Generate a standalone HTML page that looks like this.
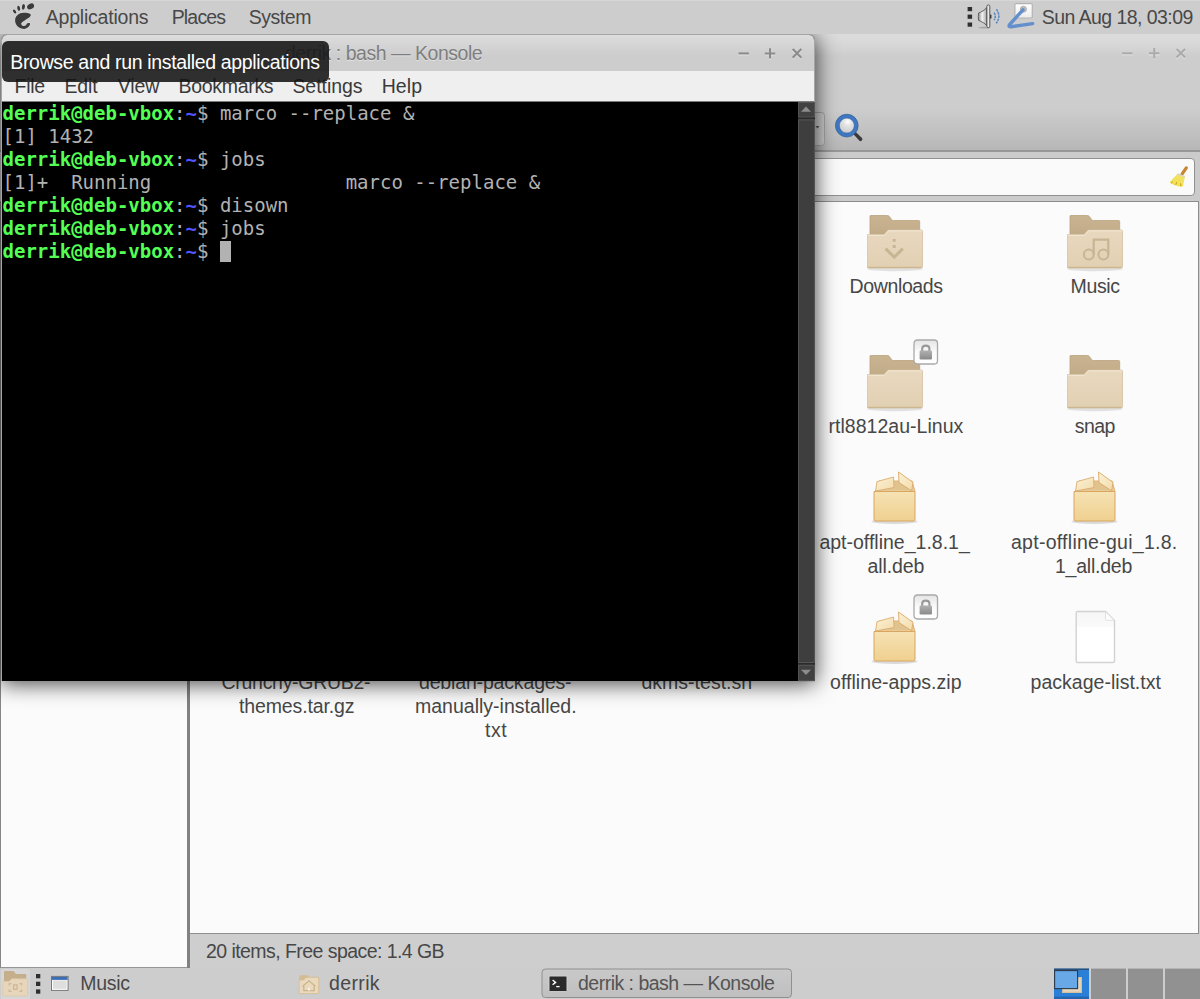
<!DOCTYPE html>
<html lang="en"><head><meta charset="utf-8"><title>derrik : bash — Konsole</title>
<style>
html,body{margin:0;padding:0}
body{width:1200px;height:999px;position:relative;overflow:hidden;background:#cdcdcd;font-family:"Liberation Sans","DejaVu Sans",sans-serif;font-size:19.5px;color:#484848}
.abs{position:absolute}
.t{position:absolute;white-space:nowrap;line-height:24px;display:block}
#toppanel{left:0;top:0;width:1200px;height:34px;background:#cdcdcd;border-top:1px solid #d7d7d7;box-sizing:border-box}
#caja{left:0;top:34px;width:1200px;height:934px;background:#cecece}
#cajahead{left:0;top:0;width:1200px;height:117px;background:linear-gradient(#dcdcdc 0,#d9d9d9 8px,#d3d3d3 16px,#cdcdcd 22px,#cdcdcd 75px,#b7b7b7 116px)}
#cajaline{left:0;top:116.3px;width:1200px;height:1.4px;background:#979797}
#locarea{left:0;top:117.7px;width:1200px;height:50px;background:#cbcbcb}
#entry{left:200px;top:123.5px;width:994.5px;height:38px;box-sizing:border-box;border:1.2px solid #909090;border-radius:4px;background:#fafafa}
#sidebar{left:0;top:167px;width:187px;height:767px;background:#fbfbfb;border-left:1px solid #868686;border-bottom:1.2px solid #959595;box-sizing:border-box}
#sep{left:187px;top:167px;width:3px;height:767px;background:#818181}
#iconview{left:190px;top:167px;width:1009px;height:733px;background:#fbfbfb;border-top:1.4px solid #8c8c8c;border-bottom:1px solid #8f8f8f;border-right:1px solid #8c8c8c;box-sizing:border-box}
#botpanel{left:0;top:968px;width:1200px;height:31px;background:#cdcdcd}
#konsole{left:1px;top:34px;width:814px;height:647px;box-sizing:border-box;background:#000;border:1px solid #a6a6a6;border-bottom:none;border-radius:6px 6px 0 0;box-shadow:0 2px 22px rgba(0,0,0,.77)}
#ktitle{left:0;top:0;width:812px;height:36px;border-radius:5px 5px 0 0;background:linear-gradient(#dddddd 0,#d6d6d6 8px,#d1d1d1 15px,#cdcdcd 21px)}
#kmenu{left:0;top:36px;width:812px;height:30px;background:#efefef;border-bottom:1px solid #7c7c7c}
#kterm{left:0;top:67px;width:795.5px;padding-left:.5px;height:579px;background:#000;color:#b2b2b2;font-family:"DejaVu Sans Mono","Liberation Mono",monospace;font-size:19px;line-height:23px;white-space:pre;overflow:hidden}
#kterm .ln{height:23px}
#kterm b.g{color:#54ff54}
#kterm b.b{color:#5454ff}
#kterm .cur{background:#b2b2b2;display:inline-block;height:21px;vertical-align:top;margin-top:1px}
#kscroll{left:796px;top:67px;width:17px;height:579px;background:#3d3d3d}
#tooltip{left:2px;top:41px;width:327px;height:40.5px;border-radius:6px;background:rgba(20,20,20,.875)}
</style></head><body>

<div class="abs" id="caja">
 <div class="abs" id="cajahead"></div>
 <div class="abs" id="cajaline"></div>
 <div class="abs" id="locarea"></div>
 <div class="abs" id="entry"></div>
 <div class="abs" id="sidebar"></div>
 <div class="abs" id="sep"></div>
 <div class="abs" id="iconview"></div>
</div>
<!-- caja window buttons + toolbar icons -->
<svg class="abs" style="left:800px;top:34px" width="400" height="170" viewBox="800 34 400 170" fill="none">
<path d="M1122.1 54.4 H1132.5" stroke="rgba(255,255,255,.38)" stroke-width="2"/><path d="M1149.0 54.4 H1159.4 M1154.2 49.199999999999996 V59.6" stroke="rgba(255,255,255,.38)" stroke-width="2"/><path d="M1176.5 50.1 L1185.1 58.699999999999996 M1185.1 50.1 L1176.5 58.699999999999996" stroke="rgba(255,255,255,.38)" stroke-width="2.1"/><path d="M1122.1 53.3 H1132.5" stroke="#ababab" stroke-width="2"/><path d="M1149.0 53.3 H1159.4 M1154.2 48.099999999999994 V58.5" stroke="#ababab" stroke-width="2"/><path d="M1176.5 49.0 L1185.1 57.599999999999994 M1185.1 49.0 L1176.5 57.599999999999994" stroke="#ababab" stroke-width="2.1"/>
<rect x="790.5" y="112.5" width="34" height="33" rx="3" fill="#cfcfcf" stroke="#a6a6a6"/>
<path d="M815.5 126 h4 l-2 2.6z" fill="#555"/>
<!-- search -->
<defs><radialGradient id="lens" cx=".55" cy=".3" r=".7"><stop offset="0" stop-color="#ffffff"/><stop offset=".3" stop-color="#e4e4e4"/><stop offset="1" stop-color="#c4c4c4"/></radialGradient></defs>
<path d="M853 133.8 L855.2 131.6 L862 137.9 Q863 139.2 861.8 140.5 Q860.5 141.7 859.2 140.6Z" fill="#3a3a3a"/>
<circle cx="846.8" cy="125.6" r="9.4" fill="url(#lens)" stroke="#3f78c0" stroke-width="3.8"/>
<circle cx="846.8" cy="125.6" r="11.4" stroke="#2b5a9c" stroke-width=".8" opacity=".85"/>
<circle cx="846.8" cy="125.6" r="7.5" stroke="#2b5a9c" stroke-width=".8" opacity=".7"/>
<!-- broom -->
<path d="M1186.3 167.9 L1182 174.2" stroke="#c78632" stroke-width="3.2" stroke-linecap="round"/>
<path d="M1177.6 173.2 L1185.3 176 L1184.6 177.8 L1176.8 175Z" fill="#d9d3c0"/>
<path d="M1176.6 174.8 L1184.8 177.6 L1182.8 186.6 Q1176 187 1169.6 182.2Z" fill="#f2e15c"/>
<path d="M1172.3 181.5 l-.9 2 M1176.6 182.2 l-.8 2.6 M1180.6 183.4 l.3 2.6" stroke="#c99a16" stroke-width="1"/>
</svg>
<!-- file icons -->
<svg class="abs" style="left:867px;top:214.5px" width="60" height="60" viewBox="0 0 60 60">
<defs><linearGradient id="fb" x1="0" y1="0" x2="0" y2="1"><stop offset="0" stop-color="#c9b491"/><stop offset="1" stop-color="#bda682"/></linearGradient>
<linearGradient id="ff" x1="0" y1="0" x2="0" y2="1"><stop offset="0" stop-color="#e8d8be"/><stop offset="1" stop-color="#e2d0b3"/></linearGradient></defs>
<ellipse cx="28" cy="54" rx="28" ry="2.2" fill="#000" opacity=".10"/>
<path d="M3.6 0.5 H20.5 Q21.6 0.5 22.3 1.4 L24.6 4.6 Q25.3 5.5 26.4 5.5 H51.7 Q52.7 5.5 52.7 6.5 V30 H3 V1.1 Q3 0.5 3.6 0.5Z" fill="url(#fb)" stroke="#b9a27d" stroke-width=".8"/>
<path d="M1.2 19.5 H16.2 Q17.3 19.5 18 18.7 L20.2 15.9 Q20.9 15 22 15 H54.3 Q55.5 15 55.5 16.2 V51.6 Q55.5 53 54.1 53 H1.4 Q0 53 0 51.6 V20.7 Q0 19.5 1.2 19.5Z" fill="url(#ff)" stroke="#d3bf9e" stroke-width=".8"/>
<path d="M1 20.3 H16.4 Q17.5 20.3 18.3 19.4 L20.5 16.6 Q21 15.9 22 15.9 H54.6" fill="none" stroke="#f3e9d6" stroke-width="1"/>
<path d="M0.8 52.3 H54.7" stroke="#cbb690" stroke-width="1.2" fill="none"/>
<g fill="none" stroke="#c8b593" stroke-width="3"><path d="M18.6 33.6 L27.2 42.2 L35.8 33.6"/></g><rect x="25.7" y="24" width="3" height="2.8" fill="#c8b593"/><rect x="25.7" y="30" width="3" height="3" fill="#c8b593"/></svg>
<svg class="abs" style="left:1066.5px;top:214.5px" width="60" height="60" viewBox="0 0 60 60">
<defs><linearGradient id="fb" x1="0" y1="0" x2="0" y2="1"><stop offset="0" stop-color="#c9b491"/><stop offset="1" stop-color="#bda682"/></linearGradient>
<linearGradient id="ff" x1="0" y1="0" x2="0" y2="1"><stop offset="0" stop-color="#e8d8be"/><stop offset="1" stop-color="#e2d0b3"/></linearGradient></defs>
<ellipse cx="28" cy="54" rx="28" ry="2.2" fill="#000" opacity=".10"/>
<path d="M3.6 0.5 H20.5 Q21.6 0.5 22.3 1.4 L24.6 4.6 Q25.3 5.5 26.4 5.5 H51.7 Q52.7 5.5 52.7 6.5 V30 H3 V1.1 Q3 0.5 3.6 0.5Z" fill="url(#fb)" stroke="#b9a27d" stroke-width=".8"/>
<path d="M1.2 19.5 H16.2 Q17.3 19.5 18 18.7 L20.2 15.9 Q20.9 15 22 15 H54.3 Q55.5 15 55.5 16.2 V51.6 Q55.5 53 54.1 53 H1.4 Q0 53 0 51.6 V20.7 Q0 19.5 1.2 19.5Z" fill="url(#ff)" stroke="#d3bf9e" stroke-width=".8"/>
<path d="M1 20.3 H16.4 Q17.5 20.3 18.3 19.4 L20.5 16.6 Q21 15.9 22 15.9 H54.6" fill="none" stroke="#f3e9d6" stroke-width="1"/>
<path d="M0.8 52.3 H54.7" stroke="#cbb690" stroke-width="1.2" fill="none"/>
<g fill="none" stroke="#c8b593" stroke-width="2"><circle cx="21.8" cy="39.5" r="4.9"/><circle cx="36.4" cy="39.5" r="4.9"/><path d="M26.7 39.5 V24.6 H41.3 V39.5" stroke-width="2.2"/></g></svg>
<svg class="abs" style="left:867px;top:354.5px" width="60" height="60" viewBox="0 0 60 60">
<defs><linearGradient id="fb" x1="0" y1="0" x2="0" y2="1"><stop offset="0" stop-color="#c9b491"/><stop offset="1" stop-color="#bda682"/></linearGradient>
<linearGradient id="ff" x1="0" y1="0" x2="0" y2="1"><stop offset="0" stop-color="#e8d8be"/><stop offset="1" stop-color="#e2d0b3"/></linearGradient></defs>
<ellipse cx="28" cy="54" rx="28" ry="2.2" fill="#000" opacity=".10"/>
<path d="M3.6 0.5 H20.5 Q21.6 0.5 22.3 1.4 L24.6 4.6 Q25.3 5.5 26.4 5.5 H51.7 Q52.7 5.5 52.7 6.5 V30 H3 V1.1 Q3 0.5 3.6 0.5Z" fill="url(#fb)" stroke="#b9a27d" stroke-width=".8"/>
<path d="M1.2 19.5 H16.2 Q17.3 19.5 18 18.7 L20.2 15.9 Q20.9 15 22 15 H54.3 Q55.5 15 55.5 16.2 V51.6 Q55.5 53 54.1 53 H1.4 Q0 53 0 51.6 V20.7 Q0 19.5 1.2 19.5Z" fill="url(#ff)" stroke="#d3bf9e" stroke-width=".8"/>
<path d="M1 20.3 H16.4 Q17.5 20.3 18.3 19.4 L20.5 16.6 Q21 15.9 22 15.9 H54.6" fill="none" stroke="#f3e9d6" stroke-width="1"/>
<path d="M0.8 52.3 H54.7" stroke="#cbb690" stroke-width="1.2" fill="none"/>
</svg>
<svg class="abs" style="left:1066.5px;top:354.5px" width="60" height="60" viewBox="0 0 60 60">
<defs><linearGradient id="fb" x1="0" y1="0" x2="0" y2="1"><stop offset="0" stop-color="#c9b491"/><stop offset="1" stop-color="#bda682"/></linearGradient>
<linearGradient id="ff" x1="0" y1="0" x2="0" y2="1"><stop offset="0" stop-color="#e8d8be"/><stop offset="1" stop-color="#e2d0b3"/></linearGradient></defs>
<ellipse cx="28" cy="54" rx="28" ry="2.2" fill="#000" opacity=".10"/>
<path d="M3.6 0.5 H20.5 Q21.6 0.5 22.3 1.4 L24.6 4.6 Q25.3 5.5 26.4 5.5 H51.7 Q52.7 5.5 52.7 6.5 V30 H3 V1.1 Q3 0.5 3.6 0.5Z" fill="url(#fb)" stroke="#b9a27d" stroke-width=".8"/>
<path d="M1.2 19.5 H16.2 Q17.3 19.5 18 18.7 L20.2 15.9 Q20.9 15 22 15 H54.3 Q55.5 15 55.5 16.2 V51.6 Q55.5 53 54.1 53 H1.4 Q0 53 0 51.6 V20.7 Q0 19.5 1.2 19.5Z" fill="url(#ff)" stroke="#d3bf9e" stroke-width=".8"/>
<path d="M1 20.3 H16.4 Q17.5 20.3 18.3 19.4 L20.5 16.6 Q21 15.9 22 15.9 H54.6" fill="none" stroke="#f3e9d6" stroke-width="1"/>
<path d="M0.8 52.3 H54.7" stroke="#cbb690" stroke-width="1.2" fill="none"/>
</svg>
<svg class="abs" style="left:912.8px;top:338.8px" width="26" height="26" viewBox="0 0 26 26">
<defs><linearGradient id="lk" x1="0" y1="0" x2="0" y2="1"><stop offset="0" stop-color="#e4e4e4"/><stop offset=".5" stop-color="#fbfbfb"/><stop offset="1" stop-color="#ffffff"/></linearGradient>
<linearGradient id="lb" x1="0" y1="0" x2="0" y2="1"><stop offset="0" stop-color="#b0b0b0"/><stop offset="1" stop-color="#8a8a8a"/></linearGradient></defs>
<rect x="1" y="1" width="23.5" height="24" rx="3.2" fill="url(#lk)" stroke="#a9a9a9" stroke-width="1.3"/>
<path d="M9.2 12 V9.6 Q9.2 6.6 12.8 6.6 Q16.4 6.6 16.4 9.6 V12" fill="none" stroke="#999" stroke-width="2.1"/>
<rect x="6.6" y="11.6" width="12.4" height="8.8" rx="1.2" fill="url(#lb)"/>
</svg>
<svg class="abs" style="left:870px;top:470px" width="52" height="58" viewBox="0 0 52 58">
<defs><linearGradient id="pk" x1="0" y1="0" x2="0" y2="1"><stop offset="0" stop-color="#f6e2b4"/><stop offset="1" stop-color="#efd08f"/></linearGradient>
<linearGradient id="pf" x1="0" y1="0" x2="1" y2="1"><stop offset="0" stop-color="#fbf0d6"/><stop offset="1" stop-color="#f3dcaa"/></linearGradient></defs>
<ellipse cx="24.5" cy="51.5" rx="23" ry="2.4" fill="#000" opacity=".13"/>
<path d="M5.5 21.5 L9 11 H42 L45 21.5Z" fill="#e7cc9a" stroke="#d9ab69" stroke-width=".9"/>
<path d="M12 12 H40 L42 20 H9Z" fill="#dcbc86" opacity=".55"/>
<path d="M4 21.5 H45 V49.3 Q45 51 43.3 51 H5.7 Q4 51 4 49.3Z" fill="url(#pk)" stroke="#d9a55f" stroke-width="1"/>
<path d="M7 11.6 L23.5 7 L24 17.5 L5.5 21Z" fill="url(#pf)" stroke="#dcae70" stroke-width=".9" stroke-linejoin="round"/>
<path d="M28.5 2 L43 12.3 L41.6 20.8 L29 12.6Z" fill="url(#pf)" stroke="#dba968" stroke-width=".9" stroke-linejoin="round"/>
</svg>
<svg class="abs" style="left:1069.7px;top:470px" width="52" height="58" viewBox="0 0 52 58">
<defs><linearGradient id="pk" x1="0" y1="0" x2="0" y2="1"><stop offset="0" stop-color="#f6e2b4"/><stop offset="1" stop-color="#efd08f"/></linearGradient>
<linearGradient id="pf" x1="0" y1="0" x2="1" y2="1"><stop offset="0" stop-color="#fbf0d6"/><stop offset="1" stop-color="#f3dcaa"/></linearGradient></defs>
<ellipse cx="24.5" cy="51.5" rx="23" ry="2.4" fill="#000" opacity=".13"/>
<path d="M5.5 21.5 L9 11 H42 L45 21.5Z" fill="#e7cc9a" stroke="#d9ab69" stroke-width=".9"/>
<path d="M12 12 H40 L42 20 H9Z" fill="#dcbc86" opacity=".55"/>
<path d="M4 21.5 H45 V49.3 Q45 51 43.3 51 H5.7 Q4 51 4 49.3Z" fill="url(#pk)" stroke="#d9a55f" stroke-width="1"/>
<path d="M7 11.6 L23.5 7 L24 17.5 L5.5 21Z" fill="url(#pf)" stroke="#dcae70" stroke-width=".9" stroke-linejoin="round"/>
<path d="M28.5 2 L43 12.3 L41.6 20.8 L29 12.6Z" fill="url(#pf)" stroke="#dba968" stroke-width=".9" stroke-linejoin="round"/>
</svg>
<svg class="abs" style="left:870px;top:610px" width="52" height="58" viewBox="0 0 52 58">
<defs><linearGradient id="pk" x1="0" y1="0" x2="0" y2="1"><stop offset="0" stop-color="#f6e2b4"/><stop offset="1" stop-color="#efd08f"/></linearGradient>
<linearGradient id="pf" x1="0" y1="0" x2="1" y2="1"><stop offset="0" stop-color="#fbf0d6"/><stop offset="1" stop-color="#f3dcaa"/></linearGradient></defs>
<ellipse cx="24.5" cy="51.5" rx="23" ry="2.4" fill="#000" opacity=".13"/>
<path d="M5.5 21.5 L9 11 H42 L45 21.5Z" fill="#e7cc9a" stroke="#d9ab69" stroke-width=".9"/>
<path d="M12 12 H40 L42 20 H9Z" fill="#dcbc86" opacity=".55"/>
<path d="M4 21.5 H45 V49.3 Q45 51 43.3 51 H5.7 Q4 51 4 49.3Z" fill="url(#pk)" stroke="#d9a55f" stroke-width="1"/>
<path d="M7 11.6 L23.5 7 L24 17.5 L5.5 21Z" fill="url(#pf)" stroke="#dcae70" stroke-width=".9" stroke-linejoin="round"/>
<path d="M28.5 2 L43 12.3 L41.6 20.8 L29 12.6Z" fill="url(#pf)" stroke="#dba968" stroke-width=".9" stroke-linejoin="round"/>
</svg>
<svg class="abs" style="left:912.8px;top:594px" width="26" height="26" viewBox="0 0 26 26">
<defs><linearGradient id="lk" x1="0" y1="0" x2="0" y2="1"><stop offset="0" stop-color="#e4e4e4"/><stop offset=".5" stop-color="#fbfbfb"/><stop offset="1" stop-color="#ffffff"/></linearGradient>
<linearGradient id="lb" x1="0" y1="0" x2="0" y2="1"><stop offset="0" stop-color="#b0b0b0"/><stop offset="1" stop-color="#8a8a8a"/></linearGradient></defs>
<rect x="1" y="1" width="23.5" height="24" rx="3.2" fill="url(#lk)" stroke="#a9a9a9" stroke-width="1.3"/>
<path d="M9.2 12 V9.6 Q9.2 6.6 12.8 6.6 Q16.4 6.6 16.4 9.6 V12" fill="none" stroke="#999" stroke-width="2.1"/>
<rect x="6.6" y="11.6" width="12.4" height="8.8" rx="1.2" fill="url(#lb)"/>
</svg>
<svg class="abs" style="left:1074.5px;top:610px" width="44" height="58" viewBox="0 0 44 58">
<defs><linearGradient id="tf" x1="0" y1="0" x2="0" y2="1"><stop offset="0" stop-color="#f6f6f6"/><stop offset=".3" stop-color="#fafafa"/><stop offset=".31" stop-color="#ffffff"/><stop offset="1" stop-color="#ffffff"/></linearGradient></defs>
<path d="M2.6 1.5 H30.5 L39.5 10.5 V51 Q39.5 52.5 38 52.5 H2.6 Q1.2 52.5 1.2 51 V3 Q1.2 1.5 2.6 1.5Z" fill="url(#tf)" stroke="#d2d2d2" stroke-width="1.4"/>
<path d="M30.5 1.8 V9 Q30.5 10.3 31.8 10.3 H39.2Z" fill="#fdfdfd" stroke="#dcdcdc" stroke-width=".9"/>
</svg>
<span class="t" id="t4" style="left:849.50px;top:274.00px;font-size:19.5px;letter-spacing:-0.361px;color:#474747;">Downloads</span>
<span class="t" id="t5" style="left:1070.50px;top:274.00px;font-size:19.5px;letter-spacing:-0.330px;color:#474747;">Music</span>
<span class="t" id="t6" style="left:828.50px;top:414.00px;font-size:19.5px;letter-spacing:0.026px;color:#474747;">rtl8812au-Linux</span>
<span class="t" id="t7" style="left:1074.80px;top:414.00px;font-size:19.5px;letter-spacing:-0.566px;color:#474747;">snap</span>
<span class="t" id="t8" style="left:819.40px;top:530.00px;font-size:19.5px;letter-spacing:0.002px;color:#474747;">apt-offline_1.8.1_</span>
<span class="t" id="t9" style="left:867.50px;top:554.00px;font-size:19.5px;letter-spacing:-0.111px;color:#474747;">all.deb</span>
<span class="t" id="t10" style="left:1011.00px;top:530.00px;font-size:19.5px;letter-spacing:0.265px;color:#474747;">apt-offline-gui_1.8.</span>
<span class="t" id="t11" style="left:1055.00px;top:554.00px;font-size:19.5px;letter-spacing:-0.232px;color:#474747;">1_all.deb</span>
<span class="t" id="t12" style="left:830.00px;top:670.00px;font-size:19.5px;letter-spacing:0.052px;color:#474747;">offline-apps.zip</span>
<span class="t" id="t13" style="left:1030.60px;top:670.00px;font-size:19.5px;letter-spacing:0.016px;color:#474747;">package-list.txt</span>
<span class="t" id="t14" style="left:221.50px;top:670.00px;font-size:19.5px;letter-spacing:-0.284px;color:#474747;">Crunchy-GRUB2-</span>
<span class="t" id="t15" style="left:239.00px;top:694.00px;font-size:19.5px;letter-spacing:-0.122px;color:#474747;">themes.tar.gz</span>
<span class="t" id="t16" style="left:419.00px;top:670.00px;font-size:19.5px;letter-spacing:-0.162px;color:#474747;">debian-packages-</span>
<span class="t" id="t17" style="left:415.00px;top:694.00px;font-size:19.5px;letter-spacing:0.006px;color:#474747;">manually-installed.</span>
<span class="t" id="t18" style="left:485.00px;top:718.00px;font-size:19.5px;letter-spacing:0.503px;color:#474747;">txt</span>
<span class="t" id="t19" style="left:641.50px;top:670.00px;font-size:19.5px;letter-spacing:0.006px;color:#474747;">dkms-test.sh</span>
<span class="t" id="t20" style="left:206.00px;top:939.00px;font-size:19.5px;letter-spacing:-0.556px;color:#474747;">20 items, Free space: 1.4 GB</span>



<div class="abs" id="botpanel"></div>
<svg class="abs" style="left:0;top:967px" width="1200" height="32" viewBox="0 967 1200 32">
<rect x="1" y="969" width="29" height="31" rx="2.5" fill="#d7d7d7"/>
<!-- show desktop folder -->
<path d="M4.7 971 H13.2 Q13.8 971 14.1 971.5 L15.4 973.6 Q15.7 974 16.3 974 H25.6 Q26.3 974 26.3 974.7 V986 H4 V971.7 Q4 971 4.7 971Z" fill="#c5ae8b"/>
<path d="M3.7 981.3 H8.8 Q9.4 981.3 9.8 980.8 L11.2 979.2 Q11.6 978.7 12.2 978.7 H26.9 Q27.7 978.7 27.7 979.5 V995.1 Q27.7 996 26.8 996 H3.7 Q2.8 996 2.8 995.1 V982.1 Q2.8 981.3 3.7 981.3Z" fill="#e7d6bb" stroke="#d8c5a4" stroke-width=".7"/>
<g stroke="#cdb996" stroke-width="1.3" fill="none"><path d="M11.4 983.6 h-2.2 v2 M19.4 983.6 h2.2 v2 M11.4 991.4 h-2.2 v-2 M19.4 991.4 h2.2 v-2"/><rect x="13.6" y="984.9" width="3.4" height="4.4"/></g>
<!-- handle -->
<g fill="#2f2f2f"><rect x="36" y="974" width="4.3" height="4.3"/><rect x="36" y="981.7" width="4.3" height="4.3"/><rect x="36" y="989.4" width="4.3" height="4.3"/></g>
<!-- window icon -->
<rect x="51.5" y="976.4" width="16.6" height="14" fill="#ffffff" stroke="#777" stroke-width="1"/>
<rect x="52" y="976.9" width="15.6" height="3" fill="#3b6fb5"/>
<rect x="53" y="980.4" width="13.6" height="8.4" fill="#dedede"/>
<!-- home folder -->
<path d="M299.9 975.2 H308 Q308.8 975.2 308.8 976 V982 H299.2 V975.9 Q299.2 975.2 299.9 975.2Z" fill="#d3bb92"/>
<path d="M299.9 980 H303.6 L306.2 977.3 H317.9 Q318.7 977.3 318.7 978.1 V992.7 Q318.7 993.6 317.8 993.6 H300 Q299.1 993.6 299.1 992.7 V980.8 Q299.1 980 299.9 980Z" fill="#ead9be" stroke="#d5bd92" stroke-width=".9"/>
<path d="M302.6 986.2 L309 980.8 L315.4 986.2 M303.8 986 V990.6 H314.2 V986" stroke="#ccb58a" stroke-width="1.3" fill="none"/>
<rect x="308" y="987.6" width="2" height="3" fill="#f7efe0"/>
<!-- active task -->
<defs><linearGradient id="tb" x1="0" y1="0" x2="0" y2="1"><stop offset="0" stop-color="#c9c9c9"/><stop offset="1" stop-color="#bfbfbf"/></linearGradient></defs>
<rect x="542" y="969" width="249.5" height="28.5" rx="3.5" fill="url(#tb)" stroke="#909090" stroke-width="1"/>
<rect x="549" y="976" width="18" height="15.6" rx="1" fill="#2a2a2a" stroke="#d0d0d0" stroke-width="1"/>
<path d="M552.6 980 L555.6 982.4 L552.6 984.8" stroke="#fff" stroke-width="1.4" fill="none"/><path d="M556.2 986.6 H559.6" stroke="#fff" stroke-width="1.3"/>
<!-- workspace switcher -->
<rect x="1054" y="968.6" width="35" height="30.4" fill="#2a7fd6"/>
<rect x="1054" y="968.6" width="35" height="1.4" fill="#2d4d73"/>
<rect x="1054" y="996.6" width="35" height="2.4" fill="#2566ae"/>
<path d="M1062 977 H1082 V993 H1062Z" fill="#e6d6bb"/>
<path d="M1062.6 977.6 H1081.4 V992.4 H1062.6Z" fill="none" stroke="#d3c09c" stroke-width="1.2"/>
<rect x="1054.6" y="970.6" width="23" height="18" fill="#68a8e6" stroke="#2d3a4c" stroke-width="1.1"/>
<rect x="1091" y="968.6" width="35" height="30.4" fill="#919191"/>
<rect x="1128" y="968.6" width="35" height="30.4" fill="#919191"/>
<rect x="1165" y="968.6" width="35" height="30.4" fill="#919191"/>
</svg>
<span class="t" id="t21" style="left:80.30px;top:971.00px;font-size:19.5px;letter-spacing:-0.330px;color:#484848;">Music</span>
<span class="t" id="t22" style="left:329.00px;top:971.00px;font-size:19.5px;letter-spacing:0.367px;color:#484848;">derrik</span>
<span class="t" id="t23" style="left:578.00px;top:971.00px;font-size:19.5px;letter-spacing:-0.510px;color:#545454;">derrik : bash — Konsole</span>

<div class="abs" id="konsole">
 <div class="abs" id="ktitle"></div>
 <div class="abs" id="kmenu"></div>
 <div class="abs" id="kterm"><div class="ln"><b class="g">derrik@deb-vbox</b>:<b class="b">~</b>$ marco --replace &amp;</div><div class="ln">[1] 1432</div><div class="ln"><b class="g">derrik@deb-vbox</b>:<b class="b">~</b>$ jobs</div><div class="ln">[1]+  Running                 marco --replace &amp;</div><div class="ln"><b class="g">derrik@deb-vbox</b>:<b class="b">~</b>$ disown</div><div class="ln"><b class="g">derrik@deb-vbox</b>:<b class="b">~</b>$ jobs</div><div class="ln"><b class="g">derrik@deb-vbox</b>:<b class="b">~</b>$ <span class="cur"> </span></div></div>
 <div class="abs" id="kscroll"></div>
</div>
<svg class="abs" style="left:700px;top:35px" width="120" height="650" viewBox="700 35 120 650" fill="none">
<path d="M738.5 54.5 H748.9000000000001" stroke="rgba(255,255,255,.38)" stroke-width="2"/><path d="M764.8 54.5 H775.2 M770 49.3 V59.7" stroke="rgba(255,255,255,.38)" stroke-width="2"/><path d="M792.7 50.2 L801.3 58.8 M801.3 50.2 L792.7 58.8" stroke="rgba(255,255,255,.38)" stroke-width="2.1"/><path d="M738.5 53.4 H748.9000000000001" stroke="#8b8b8b" stroke-width="2"/><path d="M764.8 53.4 H775.2 M770 48.199999999999996 V58.6" stroke="#8b8b8b" stroke-width="2"/><path d="M792.7 49.1 L801.3 57.699999999999996 M801.3 49.1 L792.7 57.699999999999996" stroke="#8b8b8b" stroke-width="2.1"/>
<rect x="798" y="102" width="17" height="579" fill="#3e3e3e"/>
<rect x="798.6" y="102.5" width="15.8" height="14.6" fill="#414141" stroke="#565656" stroke-width="1"/>
<path d="M801 111.8 L806 106.6 L811 111.8Z" fill="#8c8c8c"/>
<rect x="798" y="117.6" width="17" height="1.7" fill="#2b2b2b"/>
<rect x="798.6" y="119.9" width="15.8" height="542.6" fill="#3e3e3e" stroke="#555555" stroke-width="1"/>
<rect x="798" y="663" width="17" height="1.7" fill="#2b2b2b"/>
<rect x="798.6" y="665.3" width="15.8" height="15.4" fill="#414141" stroke="#565656" stroke-width="1"/>
<path d="M801 669.8 L811 669.8 L806 675Z" fill="#8c8c8c"/>
</svg>
<span class="t" id="t24" style="left:285.00px;top:41.00px;font-size:19.5px;letter-spacing:-0.478px;color:#7e7e7e;text-shadow:0 1px 0 rgba(255,255,255,.45);">derrik : bash — Konsole</span>
<span class="t" id="t25" style="left:14.50px;top:74.00px;font-size:19.5px;letter-spacing:-0.274px;color:#3a3a3a;">File</span>
<span class="t" id="t26" style="left:64.50px;top:74.00px;font-size:19.5px;letter-spacing:-0.170px;color:#3a3a3a;">Edit</span>
<span class="t" id="t27" style="left:117.70px;top:74.00px;font-size:19.5px;letter-spacing:-0.107px;color:#3a3a3a;">View</span>
<span class="t" id="t28" style="left:178.50px;top:74.00px;font-size:19.5px;letter-spacing:-0.304px;color:#3a3a3a;">Bookmarks</span>
<span class="t" id="t29" style="left:292.40px;top:74.00px;font-size:19.5px;letter-spacing:-0.038px;color:#3a3a3a;">Settings</span>
<span class="t" id="t30" style="left:381.70px;top:74.00px;font-size:19.5px;letter-spacing:0.064px;color:#3a3a3a;">Help</span>

<div class="abs" id="toppanel"></div>
<svg class="abs" style="left:0;top:0" width="1200" height="34" viewBox="0 0 1200 34">
<!-- gnome foot -->
<g fill="#3b3b3b" stroke="#e2e2e2" stroke-opacity=".55" stroke-width="1.2" paint-order="stroke">
<path d="M15.1 20.4 C15.1 16 19 12.8 23.6 12.8 C27 12.8 30.8 13.3 30.8 15 C30.8 17 27 18.8 24.3 20.7 C22.6 21.9 21.2 22.6 21.2 23.5 C21.2 25 22.2 25.9 23.6 25.9 C25.4 25.9 26.3 25 26.7 23.9 C27.2 22.8 29.3 22.7 29.9 23.3 C30.6 24.2 29.3 26.5 27.7 27.6 C26.4 28.5 25.4 28.9 24.3 28.9 C19.2 28.9 15.1 25 15.1 20.4Z"/>
<ellipse cx="30.6" cy="6.4" rx="3.7" ry="2.6" transform="rotate(-28 30.6 6.4)"/>
<ellipse cx="23.4" cy="6.9" rx="1.55" ry="2.9" transform="rotate(8 23.4 6.9)"/>
<ellipse cx="18.7" cy="8.3" rx="1.4" ry="2.6" transform="rotate(-14 18.7 8.3)"/>
<ellipse cx="14.6" cy="11.5" rx="1.3" ry="2.2" transform="rotate(-38 14.6 11.5)"/>
</g>
<!-- handle -->
<g fill="#2f2f2f"><rect x="967.6" y="7" width="4.5" height="4.2"/><rect x="967.6" y="14.6" width="4.5" height="4.2"/><rect x="967.6" y="22.5" width="4.5" height="4.2"/></g>
<!-- speaker -->
<defs><linearGradient id="spk" x1="0" y1="0" x2="1" y2="0"><stop offset="0" stop-color="#8d8d8d"/><stop offset=".45" stop-color="#f4f4f4"/><stop offset="1" stop-color="#a5a5a5"/></linearGradient></defs>
<ellipse cx="984.5" cy="27.6" rx="6" ry="1" fill="#000" opacity=".18"/>
<path d="M978.6 13 Q978 16.5 978.6 20.4 L980.6 21.2 Q984 22.6 986.8 25.6 V7.6 Q984 10.8 980.6 12.2Z" fill="url(#spk)" stroke="#555" stroke-width=".9" stroke-linejoin="round"/>
<rect x="986.9" y="5" width="2.9" height="22.6" rx="1.3" fill="#e9e9e9" stroke="#4a4a4a" stroke-width=".9"/>
<rect x="990" y="14.4" width="1.5" height="4.4" rx=".7" fill="#3e3e3e"/>
<path d="M994 12.6 Q996.6 16.4 994 20" stroke="#5b88c0" stroke-width="1.5" fill="none" stroke-dasharray="2.6 .7"/>
<path d="M996.4 9.2 Q1001.4 16.4 996.2 23.4" stroke="#5b88c0" stroke-width="1.5" fill="none" stroke-dasharray="2.6 .7"/>
<!-- network -->
<defs><linearGradient id="nw" x1="0" y1="0" x2="0" y2="1"><stop offset="0" stop-color="#ffffff"/><stop offset="1" stop-color="#ececec"/></linearGradient></defs>
<rect x="1014.9" y="3.6" width="17.4" height="14.4" rx="1.2" fill="url(#nw)" stroke="#b3b3b3" stroke-width="1.2"/>
<circle cx="1023.4" cy="9.2" r="3" fill="#bdbdbd" stroke="#a3a3a3" stroke-width=".8"/>
<path d="M1023 9.8 L1010 24.2 Q1007.6 27 1011 26.7 L1032.6 23.6" stroke="#6390cc" stroke-width="3.4" fill="none" stroke-linecap="round" stroke-linejoin="round"/>
</svg>
<span class="t" id="t0" style="left:45.70px;top:5.00px;font-size:19.5px;letter-spacing:-0.205px;">Applications</span>
<span class="t" id="t1" style="left:171.70px;top:5.00px;font-size:19.5px;letter-spacing:-0.826px;">Places</span>
<span class="t" id="t2" style="left:248.70px;top:5.00px;font-size:19.5px;letter-spacing:-0.463px;">System</span>
<span class="t" id="t3" style="left:1041.70px;top:5.00px;font-size:19.5px;letter-spacing:-0.555px;">Sun Aug 18, 03:09</span>

<div class="abs" id="tooltip"></div>
<span class="t" id="t31" style="left:10.30px;top:50.00px;font-size:19.5px;letter-spacing:-0.338px;color:#fff;">Browse and run installed applications</span>
</body></html>
